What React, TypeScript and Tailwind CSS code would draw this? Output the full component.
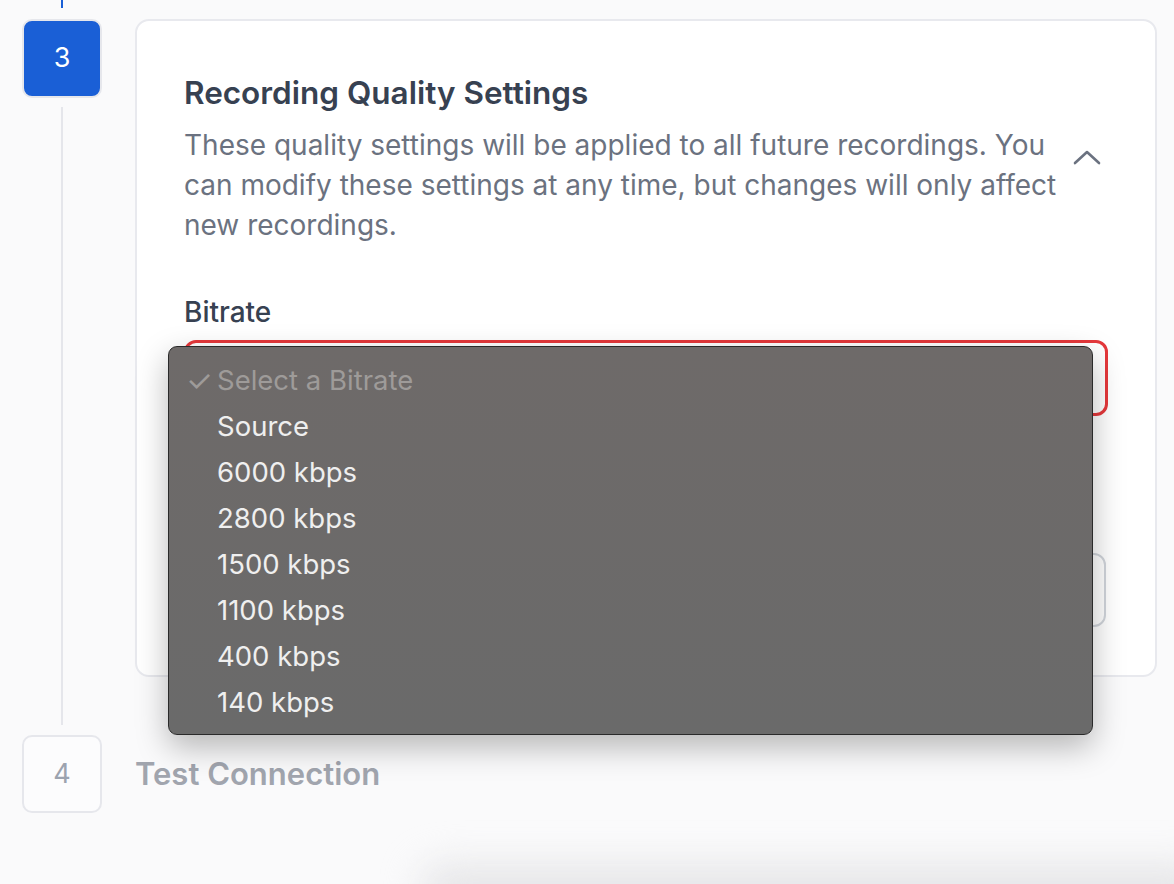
import React from "react";

const bitrates = ["Source", "6000 kbps", "2800 kbps", "1500 kbps", "1100 kbps", "400 kbps", "140 kbps"];

const BitrateMenu = () => (
  <div className="absolute left-[-16px] top-[6px] z-10 w-[925px] rounded-[9px] border border-[#2a2a2a] bg-gradient-to-b from-[#6e6a69] to-[#6a6a6a] pt-[11px] pb-[8px] shadow-[0_12px_32px_rgba(0,0,0,0.28)]">
    <div className="flex h-[46px] items-center pl-[17px] text-[27.5px] text-[#9e9b99]">
      <span className="w-[31px] text-[30px] leading-none">✓</span>
      <span>Select a Bitrate</span>
    </div>
    {bitrates.map((b) => (
      <div key={b} className="flex h-[46px] items-center pl-[48px] text-[27.5px] text-[#efefef]">
        {b}
      </div>
    ))}
  </div>
);

export default function App() {
  return (
    <div className="relative min-h-screen overflow-hidden bg-[#fafafb] pl-[22px] pr-[17px] font-[Inter,sans-serif]">
      <div className="flex gap-[33px]">
        <div className="flex w-[80px] flex-col items-center">
          <div className="h-[8px] w-[2px] bg-[#1a5fd6]" />
          <div className="mt-[11px] flex h-[79px] w-[80px] items-center justify-center rounded-[10px] border-2 border-[#e6e7ec] bg-[#1a5fd6] text-[27px] text-white">
            3
          </div>
          <div className="mt-[9px] w-[2px] flex-1 bg-[#e5e6eb]" />
        </div>

        <div className="flex-1 pt-[19px] pb-[48px]">
          <div className="rounded-[14px] border-2 border-[#e8e9ee] bg-white px-[47px] pt-[54px] pb-[48px]">
            <div className="flex items-center">
              <div className="flex-1 pr-[14px]">
                <h2 className="text-[31.5px] leading-[36px] font-semibold text-[#374151]">Recording Quality Settings</h2>
                <p className="mt-[14px] max-w-[880px] text-[28px] leading-[40px] text-[#6b7280]">
                  These quality settings will be applied to all future recordings. You can modify these settings at any
                  time, but changes will only affect new recordings.
                </p>
              </div>
              <svg width="28" height="16" viewBox="0 0 28 16" className="mr-[7px] mt-[-6px] shrink-0">
                <polyline points="2,14 14,3 26,14" fill="none" stroke="#6b7280" strokeWidth="2.6" strokeLinecap="round" strokeLinejoin="round" />
              </svg>
            </div>

            <div className="mt-[51px] text-[28px] leading-[32px] font-medium text-[#374151]">Bitrate</div>
            <div className="relative mt-[12px]">
              <div className="h-[76px] rounded-[12px] border-[3px] border-[#e5383b] bg-white" />
              <BitrateMenu />
            </div>

            <div className="mt-[137px] mr-[2px] h-[74px] rounded-[12px] border-2 border-[#d1d5db] bg-white" />
          </div>
        </div>
      </div>

      <div className="mt-[10px] flex items-center gap-[33px]">
        <div className="flex h-[78px] w-[80px] items-center justify-center rounded-[10px] border-2 border-[#e6e7ec] bg-[#fcfcfd] text-[27px] text-[#9ca3af]">
          4
        </div>
        <div className="text-[31px] font-semibold text-[#a1a5ae]">Test Connection</div>
      </div>

      <div className="pointer-events-none fixed bottom-[-30px] left-[420px] right-[-40px] h-[50px] rounded-[40px] bg-[#e6e6e8] blur-[18px]" />
    </div>
  );
}
